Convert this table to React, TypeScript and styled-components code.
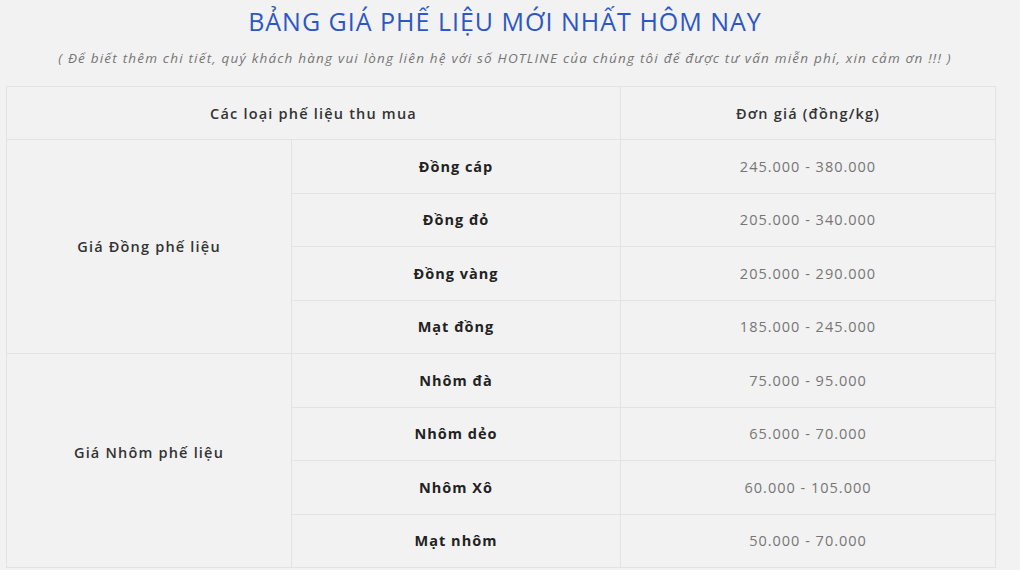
import React from 'react';
import styled, { createGlobalStyle } from 'styled-components';

const GlobalStyle = createGlobalStyle`
  html, body {
    margin: 0;
    padding: 0;
    background: #f2f2f2;
  }
  body {
    font-family: "Open Sans", "Liberation Sans", sans-serif;
  }
`;

type Item = { name: string; price: string };
type Group = { label: string; lift: number; items: Item[] };

const groups: Group[] = [
  {
    label: 'Giá Đồng phế liệu',
    lift: 0,
    items: [
      { name: 'Đồng cáp', price: '245.000 - 380.000' },
      { name: 'Đồng đỏ', price: '205.000 - 340.000' },
      { name: 'Đồng vàng', price: '205.000 - 290.000' },
      { name: 'Mạt đồng', price: '185.000 - 245.000' },
    ],
  },
  {
    label: 'Giá Nhôm phế liệu',
    lift: 16,
    items: [
      { name: 'Nhôm đà', price: '75.000 - 95.000' },
      { name: 'Nhôm dẻo', price: '65.000 - 70.000' },
      { name: 'Nhôm Xô', price: '60.000 - 105.000' },
      { name: 'Mạt nhôm', price: '50.000 - 70.000' },
    ],
  },
];

const Page = styled.div`
  width: 1020px;
  height: 570px;
  overflow: hidden;
  padding: 6px 16px 0 6px;
  box-sizing: border-box;
`;

const Title = styled.h1`
  margin: 0;
  text-align: center;
  font-size: 25px;
  font-weight: 400;
  letter-spacing: 1px;
  color: #2d57c4;
  line-height: 30px;
`;

const Note = styled.p`
  margin: 13px 0 0;
  text-align: center;
  font-size: 13.5px;
  font-style: italic;
  color: #757575;
  letter-spacing: 1.2px;
  line-height: 18px;
  white-space: nowrap;
`;

const Table = styled.div`
  width: 990px;
  margin-top: 19px;
  display: grid;
  grid-template-columns: 285px 329px 1fr;
  grid-template-rows: 53px repeat(8, 53.5px);
  border-top: 1px solid #e3e3e3;
  border-left: 1px solid #e3e3e3;
  box-sizing: border-box;
`;

type Tone = 'head' | 'name' | 'price';

const Cell = styled.div<{ $col?: string; $rows?: number; $lift?: number; $tone: Tone }>`
  display: flex;
  align-items: center;
  justify-content: center;
  border-right: 1px solid #e3e3e3;
  border-bottom: 1px solid #e3e3e3;
  font-size: 14.5px;
  padding-bottom: ${(p) => p.$lift ?? 0}px;
  grid-column: ${(p) => p.$col ?? 'auto'};
  grid-row: ${(p) => (p.$rows ? `span ${p.$rows}` : 'auto')};
  letter-spacing: ${(p) => (p.$tone === 'head' ? '1.2px' : '1px')};
  color: ${(p) => (p.$tone === 'price' ? '#767676' : p.$tone === 'name' ? '#222' : '#333')};
  font-weight: ${(p) => (p.$tone === 'name' ? 700 : p.$tone === 'price' ? 400 : 600)};
`;

export default function App() {
  return (
    <Page>
      <GlobalStyle />
      <Title>BẢNG GIÁ PHẾ LIỆU MỚI NHẤT HÔM NAY</Title>
      <Note>
        ( Để biết thêm chi tiết, quý khách hàng vui lòng liên hệ với số HOTLINE của chúng tôi để được tư vấn miễn phí, xin cảm ơn !!! )
      </Note>
      <Table>
        <Cell $col="span 2" $tone="head">Các loại phế liệu thu mua</Cell>
        <Cell $tone="head">Đơn giá (đồng/kg)</Cell>
        {groups.map((g) => (
          <React.Fragment key={g.label}>
            <Cell $col="1" $rows={g.items.length} $lift={g.lift} $tone="head">{g.label}</Cell>
            {g.items.map((it) => (
              <React.Fragment key={it.name}>
                <Cell $col="2" $tone="name">{it.name}</Cell>
                <Cell $col="3" $tone="price">{it.price}</Cell>
              </React.Fragment>
            ))}
          </React.Fragment>
        ))}
      </Table>
    </Page>
  );
}
